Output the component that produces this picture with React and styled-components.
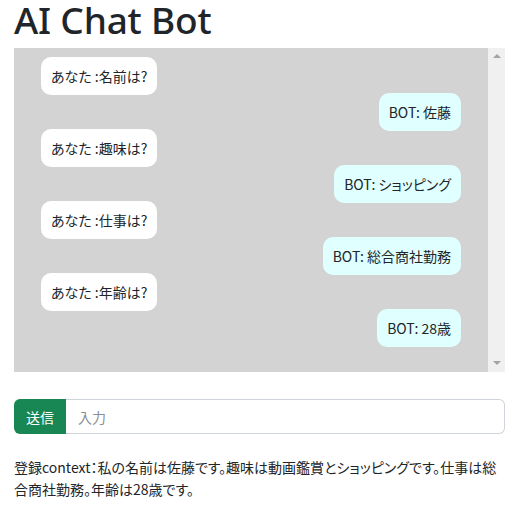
import React from "react";
import styled, { createGlobalStyle } from "styled-components";

const GlobalStyle = createGlobalStyle`
  html, body { margin: 0; padding: 0; background: #fff; }
  body {
    font-family: "Noto Sans CJK JP", "Noto Sans", sans-serif;
    font-size: 14px;
    color: #212529;
  }
  * { box-sizing: border-box; }
`;

const Page = styled.div`
  padding: 0 16px 0 14px;
`;

const Title = styled.h1`
  margin: 0 0 8px;
  height: 40px;
  font-family: "Noto Sans", sans-serif;
  font-size: 37px;
  line-height: 40px;
  font-weight: 500;
  color: #212529;
  letter-spacing: -0.2px;
`;

const ChatPanel = styled.div`
  height: 324px;
  display: flex;
`;

const MessageList = styled.div`
  flex: 1;
  min-width: 0;
  background: #d3d3d3;
  overflow: hidden;
  padding: 9px 27px 0 27px;
  display: flex;
  flex-direction: column;
`;

const ScrollTrack = styled.div`
  flex: none;
  width: 17px;
  background: #f0f0f0;
  display: flex;
  flex-direction: column;
  justify-content: space-between;
  align-items: center;
  padding: 6px 0 7px;
`;

const Arrow = styled.span`
  width: 0;
  height: 0;
  border-left: 4px solid transparent;
  border-right: 4px solid transparent;
  ${(p) =>
    p.$down
      ? "border-top: 4px solid #a3a3a3;"
      : "border-bottom: 4px solid #a3a3a3;"}
`;

const Row = styled.div`
  height: 36px;
  flex: none;
  display: flex;
  justify-content: ${(p) => (p.$bot ? "flex-end" : "flex-start")};
`;

const Bubble = styled.div`
  height: 38px;
  padding: 0 10px;
  line-height: 38px;
  font-size: 14px;
  font-feature-settings: "palt";
  border-radius: 10px;
  white-space: nowrap;
  background: ${(p) => (p.$bot ? "#e0ffff" : "#ffffff")};
  color: #212529;
`;

const InputGroup = styled.div`
  margin-top: 27px;
  display: flex;
  height: 35px;
`;

const SendButton = styled.button`
  flex: none;
  width: 52px;
  height: 35px;
  border: none;
  border-radius: 6px 0 0 6px;
  background: #198754;
  color: #fff;
  font-family: "Noto Sans CJK JP", sans-serif;
  font-size: 14px;
  padding: 0;
`;

const TextInput = styled.input`
  flex: 1;
  min-width: 0;
  height: 35px;
  border: 1px solid #ced4da;
  border-left: none;
  border-radius: 0 6px 6px 0;
  padding: 0 12px;
  font-family: "Noto Sans CJK JP", sans-serif;
  font-size: 14px;
  color: #212529;
  outline: none;
  &::placeholder { color: #8a8f95; }
`;

const Context = styled.p`
  margin: 22px 0 0;
  font-size: 14px;
  font-feature-settings: "palt";
  line-height: 22px;
  color: #212529;
`;

const messages = [
  { bot: false, text: "あなた :名前は?" },
  { bot: true, text: "BOT: 佐藤" },
  { bot: false, text: "あなた :趣味は?" },
  { bot: true, text: "BOT: ショッピング" },
  { bot: false, text: "あなた :仕事は?" },
  { bot: true, text: "BOT: 総合商社勤務" },
  { bot: false, text: "あなた :年齢は?" },
  { bot: true, text: "BOT: 28歳" },
];

export default function App() {
  return (
    <>
      <GlobalStyle />
      <Page>
        <Title>AI Chat Bot</Title>
        <ChatPanel>
          <MessageList>
            {messages.map((m, i) => (
              <Row key={i} $bot={m.bot}>
                <Bubble $bot={m.bot}>{m.text}</Bubble>
              </Row>
            ))}
          </MessageList>
          <ScrollTrack aria-hidden="true">
            <Arrow />
            <Arrow $down />
          </ScrollTrack>
        </ChatPanel>
        <InputGroup>
          <SendButton>送信</SendButton>
          <TextInput placeholder="入力" />
        </InputGroup>
        <Context>
          登録context：私の名前は佐藤です。趣味は動画鑑賞とショッピングです。仕事は総合商社勤務。年齢は28歳です。
        </Context>
      </Page>
    </>
  );
}
